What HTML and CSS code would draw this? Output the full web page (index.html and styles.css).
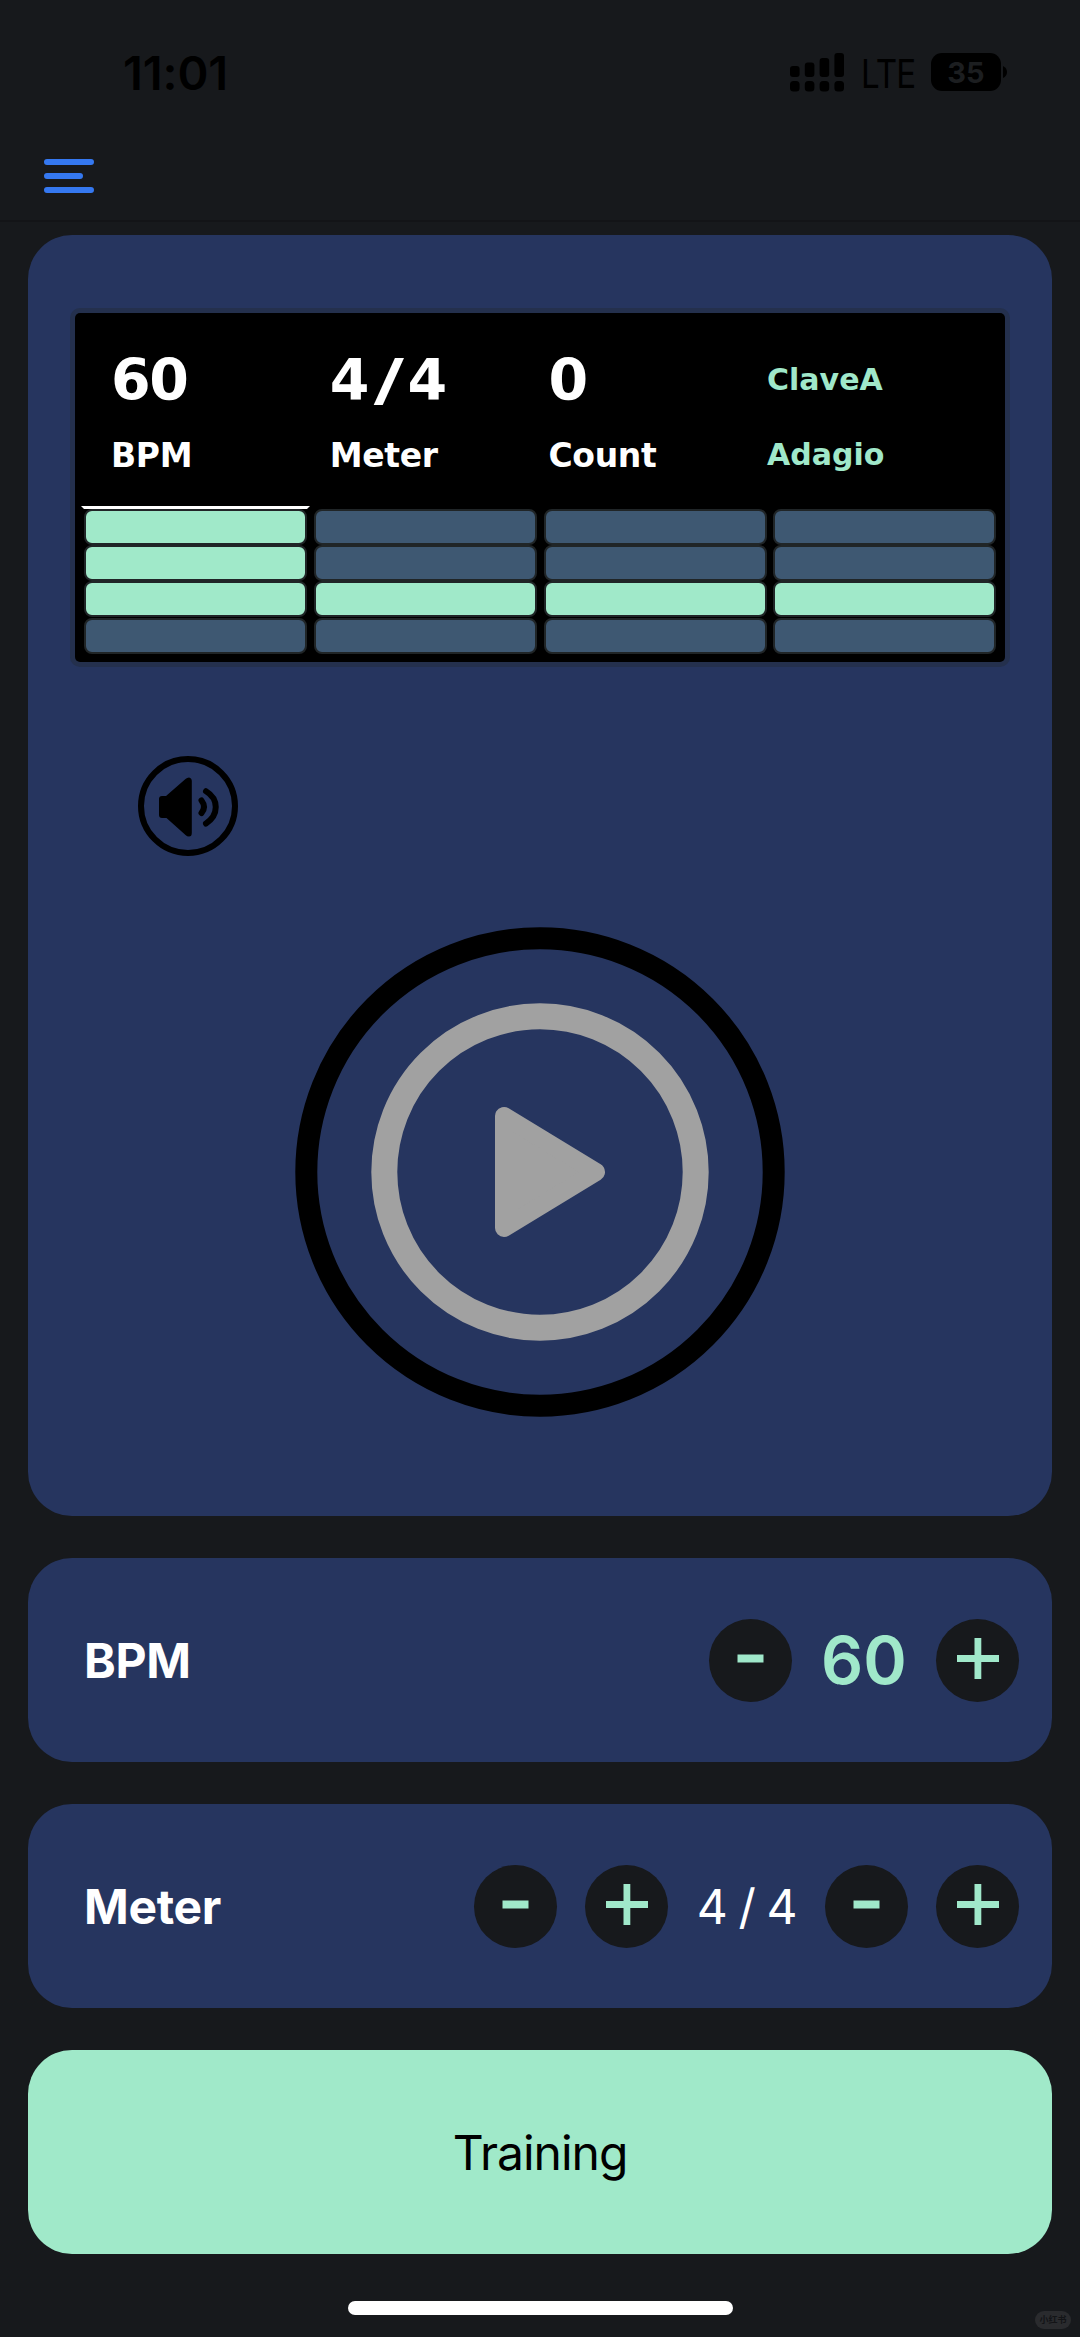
FILE: index.html
```html
<!DOCTYPE html>
<html lang="en">
<head>
<meta charset="utf-8">
<title>Metronome</title>
<link rel="stylesheet" href="styles.css">
</head>
<body>
<div class="app">
  <header class="top">
    <div class="status">
      <span class="time">11:01</span>
      <div class="status-right">
        <svg class="signal" width="54" height="39" viewBox="0 0 54 39">
          <rect x="0" y="13" width="9.6" height="11" rx="3"/><rect x="14.8" y="9.5" width="9.6" height="14.5" rx="3"/><rect x="29.6" y="5" width="9.6" height="19" rx="3"/><rect x="44.4" y="0" width="9.6" height="24" rx="3"/>
          <rect x="0" y="28" width="9.6" height="10.6" rx="3.5"/><rect x="14.8" y="28" width="9.6" height="10.6" rx="3.5"/><rect x="29.6" y="28" width="9.6" height="10.6" rx="3.5"/><rect x="44.4" y="28" width="9.6" height="10.6" rx="3.5"/>
        </svg>
        <span class="lte">LTE</span>
        <span class="battery">35</span>
        <svg class="nub" width="4" height="12" viewBox="0 0 4 12"><path d="M0 0Q4 2 4 6T0 12Z"/></svg>
      </div>
    </div>
    <svg class="menu" width="50" height="34" viewBox="0 0 50 34"><path d="M3 3H47M3 17H36M3 31H47"/></svg>
  </header>

  <main class="main">
    <section class="card player">
      <div class="display">
        <div class="stats">
          <span class="value">60</span><span class="value">4<span class="slash">/</span>4</span><span class="value">0</span><span class="info">ClaveA</span>
          <span class="label">BPM</span><span class="label">Meter</span><span class="label">Count</span><span class="info">Adagio</span>
        </div>
        <div class="beats">
          <div class="beat current"><i class="on"></i><i class="on"></i><i class="on"></i><i></i></div>
          <div class="beat"><i></i><i></i><i class="on"></i><i></i></div>
          <div class="beat"><i></i><i></i><i class="on"></i><i></i></div>
          <div class="beat"><i></i><i></i><i class="on"></i><i></i></div>
        </div>
      </div>
      <svg class="speaker" width="100" height="100" viewBox="0 0 100 100">
        <circle cx="50" cy="50" r="47" fill="none" stroke="#000" stroke-width="6"/>
        <path d="M24 40H28L47.5 23Q49 21.500 51 21.500Q53.800 22 53.800 25V77Q53.800 80.500 51 80.500Q49 80.500 47.500 79L28.500 62H24Q21 62 21 59V43Q21 40 24 40Z"/>
        <path d="M63.500 44.500Q68.500 51 63.500 57M68 35.200C81 43 81 59 68 67.500" fill="none" stroke="#000" stroke-width="6" stroke-linecap="round"/>
      </svg>
      <svg class="play" width="490" height="490" viewBox="0 0 490 490">
        <circle cx="245" cy="245" r="233.700" fill="none" stroke="#000" stroke-width="22"/>
        <circle cx="245" cy="245" r="155.700" fill="none" stroke="#a1a1a1" stroke-width="26"/>
        <path d="M209 189V301L301 245Z" fill="#a1a1a1" stroke="#a1a1a1" stroke-width="18" stroke-linejoin="round"/>
      </svg>
    </section>

    <section class="card row">
      <span class="name">BPM</span>
      <div class="controls">
        <button class="round"><svg width="42" height="42" viewBox="0 0 42 42"><path d="M7.500 15.500H33.500V23.500H7.500Z"/></svg></button>
        <span class="tempo">60</span>
        <button class="round"><svg width="42" height="42" viewBox="0 0 42 42"><path d="M0 16H17.500V-1H24.300V16H42V23H24.300V40H17.500V23H0Z"/></svg></button>
      </div>
    </section>

    <section class="card row">
      <span class="name">Meter</span>
      <div class="controls">
        <button class="round"><svg width="42" height="42" viewBox="0 0 42 42"><path d="M7.500 15.500H33.500V23.500H7.500Z"/></svg></button>
        <button class="round"><svg width="42" height="42" viewBox="0 0 42 42"><path d="M0 16H17.500V-1H24.300V16H42V23H24.300V40H17.500V23H0Z"/></svg></button>
        <span class="signature">4 / 4</span>
        <button class="round"><svg width="42" height="42" viewBox="0 0 42 42"><path d="M7.500 15.500H33.500V23.500H7.500Z"/></svg></button>
        <button class="round"><svg width="42" height="42" viewBox="0 0 42 42"><path d="M0 16H17.500V-1H24.300V16H42V23H24.300V40H17.500V23H0Z"/></svg></button>
      </div>
    </section>

    <button class="card training">Training</button>
  </main>
  <div class="home"></div>
  <span class="watermark">小红书</span>
</div>
</body>
</html>
```
FILE: styles.css
```css
* { box-sizing: border-box; }
body { margin: 0; background: #17191c; font-family: Inter, "Liberation Sans", sans-serif; }
button { border: 0; padding: 0; margin: 0; font: inherit; }
svg { display: block; overflow: visible; }
.app { position: relative; width: 1080px; height: 2337px; display: flex; flex-direction: column; }

.top { height: 222px; border-bottom: 2px solid #131417; flex: none; }
.status { height: 144px; padding: 0 73px 0 123px; display: flex; align-items: center; justify-content: space-between; }
.time { font-size: 47px; font-weight: 600; letter-spacing: -0.1px; color: #000; }
.status-right { display: flex; align-items: center; color: #000; }
.lte { width: 53px; margin: 3px 0 0 17px; font-size: 39px; letter-spacing: -1px; transform: scaleX(0.85); transform-origin: left; }
.battery { width: 70px; height: 38px; margin-left: 17px; border-radius: 11px; background: #000; color: #1c1e20; font-size: 29px; font-weight: 700; line-height: 39px; text-align: center; }
.nub { margin-left: 2px; }
.menu { margin: 15px 0 0 44px; fill: none; stroke: #3578f0; stroke-width: 6; stroke-linecap: round; }

.main { padding: 13px 28px 0; display: flex; flex-direction: column; gap: 42px; }
.card { border-radius: 44px; background: #26355f; }
.player { height: 1281px; padding: 78px 47px 0; display: flex; flex-direction: column; }
.display { height: 349px; padding-top: 37px; border-radius: 5px; background: #000; box-shadow: 0 0 0 5px #24304d; }
.stats { padding-left: 36px; display: grid; grid-template-columns: repeat(4, 218.7px); grid-template-rows: 60px 40px; row-gap: 25px; align-items: center; font-family: "DejaVu Sans", sans-serif; font-weight: 700; color: #fff; white-space: nowrap; }
.value { font-size: 57px; line-height: 60px; letter-spacing: -1.4px; }
.slash { display: inline-block; width: 39.500px; text-align: center; transform: scaleX(1.45); }
.label { font-size: 33px; line-height: 41px; letter-spacing: -0.3px; }
.info { font-size: 30px; line-height: 40px; color: #a0e8ca; }
.beats { margin: 30.500px 0 0 6px; display: flex; gap: 0.800px; }
.beat { width: 229px; border: 3px solid transparent; border-bottom: 0; display: grid; grid-template-rows: 36px 36.500px 36.500px 36px; }
.current { border-top-color: #fff; }
.beat i { width: 223px; height: 36px; border: 2px solid #202527; border-radius: 8px; background: #3e5872; }
.beat .on { background: #a0e9c9; }
.speaker { margin: 94px 0 0 63px; }
.play { margin: 71px 0 0 220px; }

.row { height: 204px; padding: 0 33px 0 56px; display: flex; align-items: center; justify-content: space-between; }
.name { font-size: 48px; font-weight: 700; letter-spacing: -0.3px; color: #fff; }
.controls { display: flex; align-items: center; gap: 28px; }
.round { width: 83px; height: 83px; border-radius: 50%; background: #17191c; display: grid; place-items: center; }
.round svg { fill: #a0e8ca; }
.tempo { width: 88px; font-size: 66px; font-weight: 600; text-align: center; color: #a0e8ca; }
.signature { width: 101px; font-size: 48px; letter-spacing: -1.4px; text-align: center; color: #fff; white-space: nowrap; }
.training { height: 204px; background: #a0e9c9; color: #000; font-size: 48px; letter-spacing: -1px; }

.home { width: 385px; height: 14px; margin: 47px 0 0 348px; border-radius: 7px; background: #fff; }
.watermark { position: absolute; left: 1035px; top: 2311px; width: 36px; height: 18px; border-radius: 9px; background: #2a2b2e; color: #131417; font: 700 9px/17px "Noto Sans CJK SC", sans-serif; text-align: center; }
```
